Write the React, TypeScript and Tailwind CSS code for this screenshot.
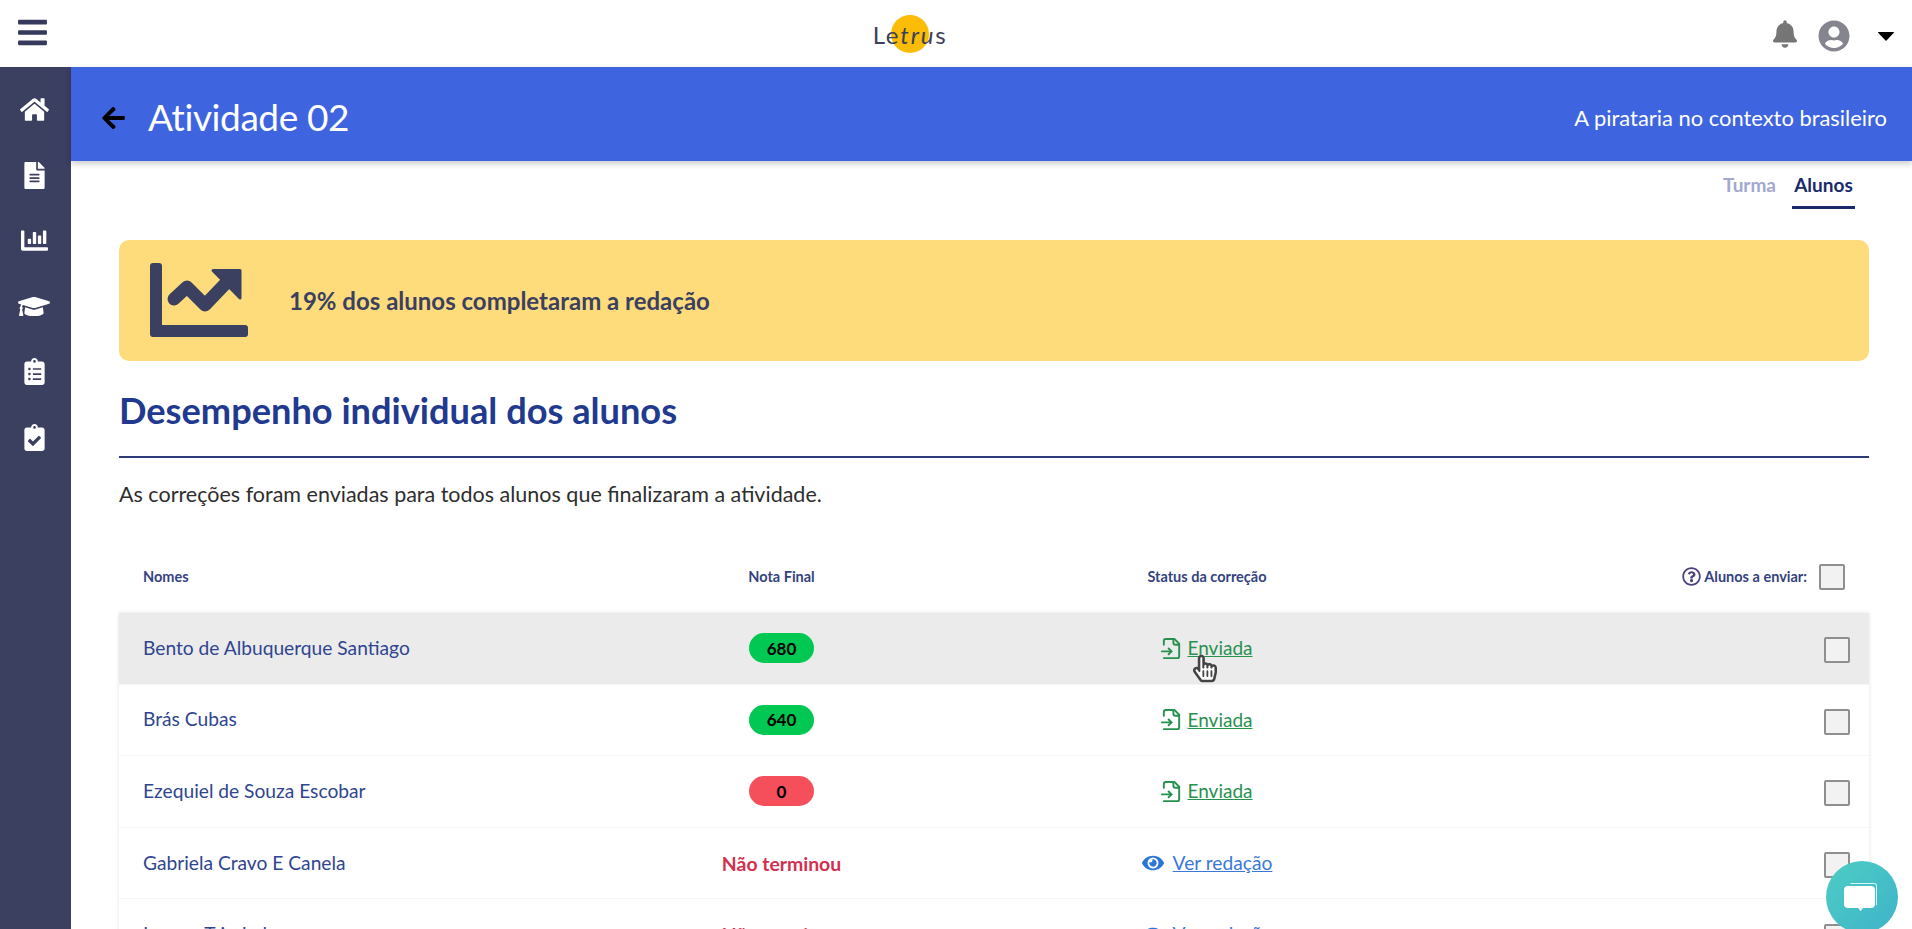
import React from "react";
import { FaHome, FaFileAlt, FaChartBar, FaGraduationCap, FaClipboardList, FaClipboardCheck, FaBell, FaUserCircle, FaArrowLeft, FaEye, FaBars, FaRegQuestionCircle, FaHandPointer, FaRegHandPointer } from "react-icons/fa";
import { LuFileInput } from "react-icons/lu";

const rows = [
  { name: "Bento de Albuquerque Santiago", grade: "680", color: "bg-[#00c853]", sent: true, hover: true },
  { name: "Brás Cubas", grade: "640", color: "bg-[#00c853]", sent: true },
  { name: "Ezequiel de Souza Escobar", grade: "0", color: "bg-[#f44f5a]", sent: true },
  { name: "Gabriela Cravo E Canela", grade: null, sent: false },
  { name: "Lorena Trindade", grade: null, sent: false },
];

function Check() {
  return <span className="block w-[26px] h-[26px] rounded-[2px] border-2 border-[#8f8f8f] bg-[#f2f2f2]" />;
}

function Row({ r }: { r: (typeof rows)[number] }) {
  return (
    <div className={`h-[71.6px] shrink-0 grid grid-cols-[538px_201px_650px_1fr] items-center pl-6 pr-[19px] border-b border-[#f6f6f6] ${r.hover ? "bg-[#ebebeb]" : "bg-white"}`}>
      <span className="text-[19.2px] text-[#2f4590] whitespace-nowrap">{r.name}</span>
      <span className="justify-self-center">
        {r.grade ? (
          <span className={`${r.color} w-[65px] h-[30px] rounded-full flex items-center justify-center text-[17px] font-bold text-black`}>{r.grade}</span>
        ) : (
          <span className="text-[19.4px] font-bold text-[#d3304f] whitespace-nowrap">Não terminou</span>
        )}
      </span>
      <span className="justify-self-center relative">
        {r.sent ? (
          <span className="flex items-center text-[19px] text-[#27924f] underline whitespace-nowrap">
            <LuFileInput className="w-[23px] h-[23px] mr-[5px] -ml-[2px]" />
            Enviada
          </span>
        ) : (
          <span className="flex items-center text-[19.2px] text-[#3a78d8] underline whitespace-nowrap">
            <FaEye className="w-[22px] h-[22px] mr-[9px] text-[#2a76d8]" />
            Ver redação
          </span>
        )}
        {r.hover && (
          <span className="absolute left-[31px] top-[20px] w-[24px] h-[29px]">
            <FaHandPointer className="absolute inset-0 w-[24px] h-[29px] text-white" />
            <FaRegHandPointer className="absolute inset-0 w-[24px] h-[29px] text-[#444444]" />
          </span>
        )}
      </span>
      <span className="justify-self-end mt-[4px]"><Check /></span>
    </div>
  );
}

export default function App() {
  return (
    <div className="relative h-[929px] w-[1912px] overflow-hidden bg-white flex flex-col font-['Lato','Carlito','Open_Sans',sans-serif]">
      <header className="h-[67px] shrink-0 flex items-center justify-between pl-[18px] pr-[18px] bg-white">
        <FaBars className="w-[29px] h-[33px] -mt-[2px] text-[#35395c]" />
        <div className="relative w-[72px] h-[40px] flex items-center justify-center">
          <span className="absolute left-[17px] top-[1px] w-[38px] h-[38px] rounded-full bg-[#fbbc05]" />
          <span className="relative mt-[3px] text-[24px] font-normal tracking-[1.8px] text-[#3d4058]">Le<span className="italic">tru</span>s</span>
        </div>
        <div className="flex items-center">
          <FaBell className="w-[24px] h-[28px] mt-[1px] text-[#757575]" />
          <FaUserCircle className="w-[32px] h-[32px] ml-[21px] mt-[5px] text-[#858590]" />
          <svg viewBox="0 0 16 9" className="w-[16px] h-[9px] ml-[28px] mt-[5px]" fill="black">
            <path d="M0.500 0h15a0.500 0.500 0 0 1 0.350 0.850L8.500 8.500a0.700 0.700 0 0 1-1 0L0.150 0.850A0.500 0.500 0 0 1 0.500 0z" />
          </svg>
        </div>
      </header>
      <div className="flex flex-1 min-h-0">
        <aside className="w-[71px] shrink-0 bg-[#3b3f60] flex flex-col items-center pt-[29px] pr-[3px] gap-[38.500px] text-white">
          <FaHome className="w-[29px] h-[27px]" />
          <FaFileAlt className="w-[21px] h-[27px]" />
          <FaChartBar className="w-[27px] h-[27px]" />
          <FaGraduationCap className="w-[32px] h-[27px]" />
          <FaClipboardList className="w-[21px] h-[27px]" />
          <FaClipboardCheck className="w-[21px] h-[27px]" />
        </aside>
        <main className="flex-1 min-w-0 flex flex-col">
          <div className="h-[94px] shrink-0 bg-[#3e65df] shadow-[0_3px_6px_rgba(0,0,0,0.2)] flex items-center justify-between pl-[31px] pr-[25px] text-white">
            <div className="flex items-center mt-[7px]">
              <FaArrowLeft className="w-[23px] h-[26px] text-black" />
              <h1 className="ml-[23px] text-[37px] tracking-[-0.4px] leading-none -mt-[3px]">Atividade 02</h1>
            </div>
            <span className="text-[21.9px] mt-[8px]">A pirataria no contexto brasileiro</span>
          </div>
          <div className="flex justify-end pr-[57px] h-[48px] shrink-0 gap-[16px] text-[19px] font-bold">
            <span className="text-[#a3a8cf] pt-[10px]">Turma</span>
            <span className="text-[#1b2a6b] w-[63px] text-center pt-[10px] border-b-[3px] border-[#1b2a6b]">Alunos</span>
          </div>
          <div className="flex flex-col pl-[48px] pr-[43px] pt-[31px]">
            <div className="h-[121px] shrink-0 rounded-[10px] bg-[#fedc7c] flex items-center pl-[31px]">
              <svg viewBox="0 0 98 74" className="w-[98px] h-[74px] text-[#3b3f60] shrink-0 -mt-[2px]" fill="currentColor">
                <path d="M0 3a3 3 0 0 1 3-3h6a3 3 0 0 1 3 3v59h83a3 3 0 0 1 3 3v6a3 3 0 0 1-3 3H3a3 3 0 0 1-3-3z" />
                <polyline points="24,36 37,24 55,42 77,19" fill="none" stroke="currentColor" strokeWidth="13" strokeLinejoin="round" strokeLinecap="round" />
                <polygon points="63,7.500 90,7.500 90,35" stroke="currentColor" strokeWidth="3" strokeLinejoin="round" />
              </svg>
              <span className="ml-[41px] text-[24px] font-bold text-[#3b3f60]">19% dos alunos completaram a redação</span>
            </div>
            <h2 className="mt-[29px] shrink-0 text-[36.200px] leading-[40px] font-bold text-[#21398f]">Desempenho individual dos alunos</h2>
            <div className="mt-[26px] h-[2px] shrink-0 bg-[#2c3a7c]" />
            <p className="mt-[22px] shrink-0 text-[21.500px] leading-[28px] text-[#2e2e2e]">As correções foram enviadas para todos alunos que finalizaram a atividade.</p>
            <div className="h-[105px] shrink-0 grid grid-cols-[538px_201px_650px_1fr] items-center pl-6 pr-6 text-[14.500px] font-bold text-[#34437f] pt-[32px]">
              <span>Nomes</span>
              <span className="justify-self-center whitespace-nowrap">Nota Final</span>
              <span className="justify-self-center whitespace-nowrap">Status da correção</span>
              <span className="justify-self-end flex items-center whitespace-nowrap">
                <FaRegQuestionCircle className="w-[19px] h-[19px] mr-[3px] text-[#4a3f80]" />
                Alunos a enviar:
                <span className="ml-[12px]"><Check /></span>
              </span>
            </div>
            <div className="flex flex-col shrink-0 shadow-[0_0_4px_rgba(0,0,0,0.12)]">
              {rows.map((r) => <Row key={r.name} r={r} />)}
            </div>
          </div>
        </main>
      </div>
      <div className="absolute left-[1826px] top-[861px] w-[72px] h-[72px] rounded-full bg-gradient-to-br from-[#4dcdc4] to-[#3fb3c9] flex items-center justify-center">
        <svg viewBox="0 0 40 40" className="w-[40px] h-[40px]" fill="white">
          <path d="M8 6h24a3 3 0 0 1 3 3v18a3 3 0 0 1-1 2V9a2 2 0 0 0-2-2H9a2 2 0 0 0-1-1z" opacity="0.8" />
          <path d="M6 9h23a4 4 0 0 1 4 4v14a4 4 0 0 1-4 4h-8l-2.500 3-2.500-3H6a4 4 0 0 1-4-4V13a4 4 0 0 1 4-4z" />
        </svg>
      </div>
    </div>
  );
}
